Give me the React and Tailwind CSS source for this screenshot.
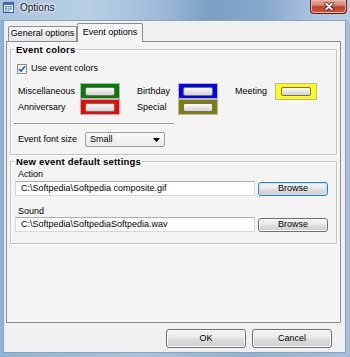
import React from 'react';

function CalendarIcon() {
    return (
        <svg width="11" height="11" viewBox="0 0 11 11">
            <rect x="0.5" y="0.5" width="10" height="10" fill="#ffffff" stroke="#2f5fa8" />
            <rect x="0.5" y="0.5" width="10" height="2.5" fill="#3a6fc4" />
            <rect x="2" y="4" width="2" height="1.5" fill="#4a7fd0" />
            <rect x="4.5" y="4" width="2" height="1.5" fill="#4a7fd0" />
            <rect x="7" y="4" width="2" height="1.5" fill="#4a7fd0" />
            <rect x="2" y="6.2" width="2" height="1.5" fill="#4a7fd0" />
            <rect x="4.5" y="6.2" width="2" height="1.5" fill="#4a7fd0" />
            <rect x="7" y="6.2" width="2" height="1.5" fill="#4a7fd0" />
            <rect x="2" y="8.4" width="2" height="1.2" fill="#4a7fd0" />
            <rect x="4.5" y="8.4" width="2" height="1.2" fill="#4a7fd0" />
        </svg>
    );
}

function Swatch({ color, wide }) {
    return (
        <div className={`${wide ? 'w-[42px] h-[17px]' : 'w-[40px] h-[16px]'} ${color} border border-[#b5b5b5] flex items-center justify-center`}>
            <div className="w-[30px] h-[9px] rounded-[2px] border border-[#707070] bg-[linear-gradient(#fbfbfb,#e6e6e6_50%,#d4d4d4)]" />
        </div>
    );
}

function WinButton({ children, className, focused }) {
    return (
        <div
            className={`flex items-center justify-center rounded-[3px] border ${focused ? 'border-[#3c7fb1] shadow-[inset_0_0_0_1px_#bfe3f8]' : 'border-[#707070] shadow-[inset_0_0_0_1px_#fcfcfc]'} bg-[linear-gradient(#f2f2f2_0%,#ebebeb_45%,#dddddd_50%,#cfcfcf_100%)] text-[9px] text-black ${className}`}
        >
            {children}
        </div>
    );
}

function TextBox({ value }) {
    return (
        <div className="w-[240px] h-[15px] bg-white border border-[#d5d9df] border-t-[#abadb3] flex items-center pl-[5px] text-[9px] whitespace-nowrap">
            {value}
        </div>
    );
}

function ColorItem({ label, labelW, color, wide }) {
    return (
        <div className="flex items-center">
            <span className={`${labelW} text-[9px] leading-[11px]`}>{label}</span>
            <Swatch color={color} wide={wide} />
        </div>
    );
}

export default function App() {
    return (
        <div className="w-[350px] h-[357px] overflow-hidden flex flex-col font-['Liberation_Sans',Arial,sans-serif] text-black bg-[linear-gradient(90deg,#8fb3d6,#a9c4de_40%,#8fb1d3_70%,#a5c0db)]">
            {/* title bar */}
            <div className="relative h-[20px] flex items-start bg-[linear-gradient(90deg,#a8c3dd_0%,#b8cfe5_25%,#9fbcd8_45%,#7d9fc4_60%,#86a8cb_75%,#abc5df_90%,#b6cde4_100%)]">
                <div className="ml-[3px] mt-[2px]">
                    <CalendarIcon />
                </div>
                <span className="ml-[6px] mt-[2px] text-[10px] leading-[12px] text-[#1a1a1a] [text-shadow:0_0_4px_#ffffff,0_0_2px_#ffffff]">Options</span>
                <div className="absolute top-0 right-[3px] w-[37px] h-[14px] rounded-b-[4px] border border-t-0 border-[#5c2117] bg-[linear-gradient(#e8ad9e_0%,#d88571_40%,#c03f27_52%,#d0583b_100%)] flex items-center justify-center shadow-[inset_0_0_0_1px_#eab4a6]">
                    <svg width="10" height="9" viewBox="0 0 10 9">
                        <path d="M2 1.5 L8 7.5 M8 1.5 L2 7.5" stroke="#4a1a12" strokeWidth="3.4" strokeLinecap="round" />
                        <path d="M2 1.5 L8 7.5 M8 1.5 L2 7.5" stroke="#ffffff" strokeWidth="1.8" strokeLinecap="round" />
                    </svg>
                </div>
            </div>

            {/* client area */}
            <div className="ml-[3px] w-[343px] h-[333px] bg-[#f0f0f0] border border-[#8ea3b9] pt-[1px]">
                {/* tabs */}
                <div className="flex items-end h-[19px] pl-[4px]">
                    <div className="w-[69px] h-[15px] border border-b-0 border-[#898c95] rounded-t-[2px] bg-[linear-gradient(#f6f6f6,#e6e6e6)] flex items-center justify-center text-[9px] whitespace-nowrap">
                        General options
                    </div>
                    <div className="relative z-10 -mb-[1px] w-[66px] h-[19px] border border-b-0 border-[#898c95] rounded-t-[2px] bg-[#f5f5f5] flex items-center justify-center text-[9px] whitespace-nowrap pb-[1px]">
                        Event options
                    </div>
                </div>

                {/* tab panel */}
                <div className="ml-[2px] w-[335px] h-[282px] border border-[#898c95] bg-[#f4f4f4] px-[3px] pt-[2px]">
                    <fieldset className="border border-[#c5c5c5] shadow-[inset_1px_1px_0_#ffffff,1px_1px_0_#ffffff]">
                        <legend className="ml-[4px] px-[1px] text-[9.5px] leading-[11px] font-bold tracking-[0.2px]">Event colors</legend>
                        <div className="mt-[8px] h-[11px] pl-[6px] flex items-center">
                            <div className="w-[10px] h-[10px] border border-[#8e8f8f] bg-[linear-gradient(135deg,#e4e4e4,#ffffff)] flex items-center justify-center">
                                <svg width="8" height="8" viewBox="0 0 8 8">
                                    <path d="M1 4 L3 6.3 L7 1.2" fill="none" stroke="#2b5aa3" strokeWidth="1.5" />
                                </svg>
                            </div>
                            <span className="ml-[4px] text-[9px] leading-[11px]">Use event colors</span>
                        </div>

                        <div className="mt-[9px] pl-[7px] flex items-center h-[16px]">
                            <ColorItem label="Miscellaneous" labelW="w-[62px]" color="bg-[#008000]" />
                            <div className="w-[17px]" />
                            <ColorItem label="Birthday" labelW="w-[41px]" color="bg-[#0000ff]" />
                            <div className="w-[17px]" />
                            <ColorItem label="Meeting" labelW="w-[40px]" color="bg-[#ffff00]" wide />
                        </div>
                        <div className="pl-[7px] flex items-center h-[16px]">
                            <ColorItem label="Anniversary" labelW="w-[62px]" color="bg-[#ff0000]" />
                            <div className="w-[17px]" />
                            <ColorItem label="Special" labelW="w-[41px]" color="bg-[#808000]" />
                        </div>

                        <div className="mt-[8px] ml-[3px] w-[160px] h-[2px] border-t border-[#a0a0a0] border-b border-b-[#ffffff]" />

                        <div className="mt-[7px] mb-[7px] pl-[7px] flex items-center h-[15px]">
                            <span className="w-[67px] text-[9px] leading-[11px]">Event font size</span>
                            <div className="w-[80px] h-[15px] border border-[#a0a0a0] rounded-[2px] bg-[linear-gradient(#f7f7f7,#ececec)] flex items-center justify-between pl-[4px] pr-[4px]">
                                <span className="text-[9px]">Small</span>
                                <svg width="7" height="4" viewBox="0 0 7 4">
                                    <path d="M0 0 L7 0 L3.5 4 Z" fill="#000000" />
                                </svg>
                            </div>
                        </div>
                    </fieldset>

                    <fieldset className="mt-[1px] border border-[#c5c5c5] shadow-[inset_1px_1px_0_#ffffff,1px_1px_0_#ffffff] pb-[11px]">
                        <legend className="ml-[4px] px-[1px] text-[9.5px] leading-[11px] font-bold tracking-[0.2px]">New event default settings</legend>
                        <div className="mt-[2px] pl-[7px] text-[9px] leading-[11px]">Action</div>
                        <div className="mt-[1px] ml-[4px] flex items-center">
                            <TextBox value="C:\Softpedia\Softpedia composite.gif" />
                            <WinButton className="ml-[3px] w-[70px] h-[14px]" focused>Browse</WinButton>
                        </div>
                        <div className="mt-[10px] pl-[7px] text-[9px] leading-[11px]">Sound</div>
                        <div className="ml-[4px] flex items-center">
                            <TextBox value="C:\Softpedia\SoftpediaSoftpedia.wav" />
                            <WinButton className="ml-[3px] w-[70px] h-[14px]">Browse</WinButton>
                        </div>
                    </fieldset>
                </div>

                {/* dialog buttons */}
                <div className="mt-[6px] flex justify-end gap-[6px] pr-[13px]">
                    <WinButton className="w-[80px] h-[19px]">OK</WinButton>
                    <WinButton className="w-[80px] h-[19px]">Cancel</WinButton>
                </div>
            </div>
        </div>
    );
}
